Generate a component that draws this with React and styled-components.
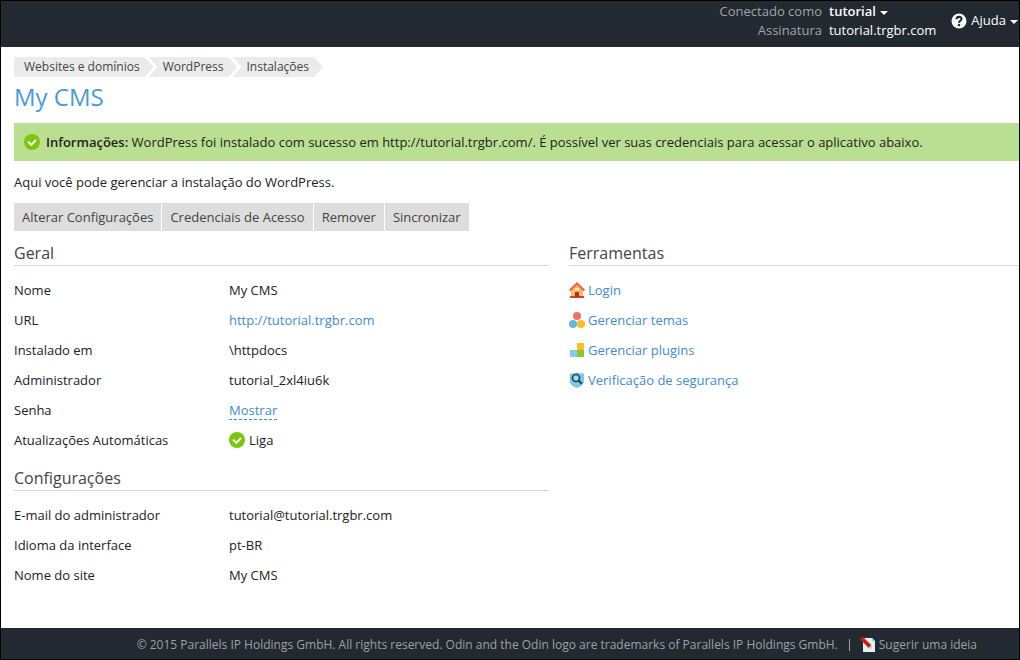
import React from "react";
import styled, { createGlobalStyle } from "styled-components";

const GlobalStyle = createGlobalStyle`
  *, *::before, *::after { box-sizing: border-box; }
  body {
    margin: 0;
    background: #fff;
    color: #222;
    font: 13px/20px "Open Sans", "Noto Sans", sans-serif;
  }
  button { font: inherit; cursor: pointer; }
`;

const Page = styled.div`
  display: flex;
  flex-direction: column;
  min-height: 100vh;
  border: 1px solid #000;
`;

const TopBar = styled.header`
  display: flex;
  justify-content: flex-end;
  align-items: flex-start;
  height: 46px;
  background: #222930;
  color: #fff;
`;

const Account = styled.dl`
  display: grid;
  grid-template-columns: auto auto;
  column-gap: 7px;
  margin: 1px 15px 0 0;
  line-height: 19px;
`;

const AccountLabel = styled.dt`
  color: #a0a5a8;
  text-align: right;
`;

const AccountValue = styled.dd`
  margin: 0;
`;

const MenuButton = styled.button`
  display: inline-flex;
  align-items: center;
  gap: 4px;
  padding: 0;
  border: 0;
  background: none;
  color: #fff;
  line-height: 19px;
  font-weight: ${(p) => (p.$strong ? 600 : 400)};
`;

const HelpArea = styled.div`
  padding: 10px 1px 0 0;
`;

const Caret = styled.span`
  margin-top: 3px;
  border: solid transparent;
  border-width: 4px 4px 0;
  border-top-color: #fff;
`;

const Content = styled.main`
  flex: 1;
  padding: 10px 0 24px 13px;
`;

const Crumbs = styled.ol`
  display: flex;
  margin: 0;
  padding: 0;
  list-style: none;
  font-size: 12px;
`;

const Crumb = styled.li`
  height: 20px;
  margin-right: -5px;
  padding: 0 14px;
  background: #ebebeb;
  clip-path: polygon(0 0, calc(100% - 9px) 0, 100% 50%, calc(100% - 9px) 100%, 0 100%, 9px 50%);

  &:first-child {
    padding-left: 10px;
    clip-path: polygon(0 0, calc(100% - 9px) 0, 100% 50%, calc(100% - 9px) 100%, 0 100%);
  }
`;

const CrumbLink = styled.a`
  color: #444;
  text-decoration: none;
`;

const Title = styled.h1`
  margin: 4px 0 11px;
  color: #4a9bdc;
  font-size: 24px;
  line-height: 31px;
  font-weight: 400;
`;

const Message = styled.div`
  display: flex;
  align-items: center;
  gap: 6px;
  min-height: 38px;
  padding: 0 10px;
  background: #bbdf91;
`;

const MessageLabel = styled.strong`
  font-weight: 600;
`;

const Intro = styled.p`
  margin: 11px 0;
`;

const Toolbar = styled.div`
  display: flex;
  gap: 1px;
`;

const ToolButton = styled.button`
  height: 28px;
  padding: 0 8px;
  border: 0;
  background: #ddd;
  color: #444;
`;

const Columns = styled.div`
  display: grid;
  grid-template-columns: 535fr 450fr;
  column-gap: 20px;
  margin-top: 10px;
`;

const Section = styled.section`
  margin-bottom: 11px;
`;

const SectionTitle = styled.h2`
  margin: 0 0 9px;
  border-bottom: 1px solid #d5d5d5;
  color: #444;
  font-size: 16px;
  line-height: 24px;
  font-weight: 400;
`;

const Details = styled.dl`
  display: grid;
  grid-template-columns: 215px 1fr;
  margin: 0;
  line-height: 30px;
`;

const Term = styled.dt``;

const Value = styled.dd`
  display: flex;
  align-items: center;
  gap: 4px;
  margin: 0;
`;

const Link = styled.a`
  color: #428bd0;
  text-decoration: none;
`;

const RevealButton = styled.button`
  padding: 0;
  border: 0;
  border-bottom: 1px dashed #428bd0;
  background: none;
  color: #428bd0;
  line-height: 18px;
`;

const ToolList = styled.ul`
  margin: 0;
  padding: 0;
  list-style: none;
`;

const ToolItem = styled.li`
  display: flex;
  align-items: center;
  gap: 3px;
  height: 30px;
`;

const Footer = styled.footer`
  display: flex;
  justify-content: flex-end;
  align-items: center;
  min-height: 31px;
  padding: 3px 42px 0 0;
  background: #222930;
  color: #9da2a5;
  font-size: 12px;
`;

const Divider = styled.span`
  width: 1px;
  height: 12px;
  margin: 0 10px 0 11px;
  background: #9da2a5;
`;

const FooterLink = styled.a`
  display: inline-flex;
  align-items: center;
  gap: 3px;
  color: inherit;
  text-decoration: none;
`;

const Icon = styled.svg.attrs({ width: 16, height: 16, viewBox: "0 0 16 16", "aria-hidden": true })`
  flex: none;
`;

const CheckIcon = () => (
  <Icon>
    <circle cx="8" cy="8" r="8" fill="#7ac70c" />
    <path d="M4 7.5l3.3 3.3L12 6" fill="none" stroke="#fff" strokeWidth="1.9" />
  </Icon>
);

const HelpIcon = () => (
  <Icon>
    <circle cx="8" cy="8" r="7.5" fill="#fff" />
    <path d="M5.6 6.2c.1-3.2 5-3 4.9-.2 0 1.8-2.500 1.800-2.500 3.800" fill="none" stroke="#222930" strokeWidth="2.100" />
    <circle cx="8" cy="12" r="1.3" fill="#222930" />
  </Icon>
);

const HomeIcon = () => (
  <Icon>
    <path d="M2 7.5L8 2l6 5.5V15H2z" fill="#ffb869" />
    <path d="M1 14h14v2H1z" fill="#c94d28" />
    <path d="M6 10h4v5H6z" fill="#b92f16" />
    <path d="M6 6h4v2H6z" fill="#fff0d6" />
    <path d="M.7 8.4L8 1.5l7.3 6.9" fill="none" stroke="#ef6336" strokeWidth="2" />
  </Icon>
);

const ThemesIcon = () => (
  <Icon>
    <circle cx="8" cy="4" r="4" fill="#f56d64" />
    <circle cx="4" cy="12" r="4" fill="#60b7e2" />
    <circle cx="12" cy="12" r="4" fill="#ffbe28" />
  </Icon>
);

const PluginsIcon = () => (
  <Icon>
    <path d="M1 8h7v7H1z" fill="#82cdee" />
    <path d="M8 1h7v7H8z" fill="#ffbe28" />
    <path d="M8 8h7v7H8z" fill="#8bc82d" />
  </Icon>
);

const SecurityIcon = () => (
  <Icon>
    <path d="M8 0l2 1.3 5 .3V9c0 3.7-3.3 5.6-7 7-3.7-1.4-7-3.3-7-7V1.6l5-.3z" fill="#79c8e8" />
    <circle cx="7" cy="6" r="3.5" fill="#a2def2" stroke="#24475c" strokeWidth="1.7" />
    <path d="M9.5 8.5l3.3 3.3" stroke="#24475c" strokeWidth="2.3" />
  </Icon>
);

const IdeaIcon = () => (
  <Icon>
    <path d="M3 1h9l3 3v11H3z" fill="#d9f3fc" />
    <path d="M12 1v3h3z" fill="#94cde2" />
    <path d="M0 2l3-2 8.3 8-2.8 3z" fill="#d82214" />
    <path d="M1.5 1l8.3 8.5" stroke="#a9120d" strokeWidth="1" />
    <path d="M11.3 8l.9 4-3.7-1z" fill="#f3c35b" />
  </Icon>
);

const crumbs = ["Websites e domínios", "WordPress", "Instalações"];
const actions = ["Alterar Configurações", "Credenciais de Acesso", "Remover", "Sincronizar"];

const general = [
  ["Nome", "My CMS"],
  ["URL", <Link href="#site">http://tutorial.trgbr.com</Link>],
  ["Instalado em", "\\httpdocs"],
  ["Administrador", "tutorial_2xl4iu6k"],
  ["Senha", <RevealButton type="button">Mostrar</RevealButton>],
  ["Atualizações Automáticas", <><CheckIcon />Liga</>],
];

const settings = [
  ["E-mail do administrador", "tutorial@tutorial.trgbr.com"],
  ["Idioma da interface", "pt-BR"],
  ["Nome do site", "My CMS"],
];

const tools = [
  ["Login", HomeIcon],
  ["Gerenciar temas", ThemesIcon],
  ["Gerenciar plugins", PluginsIcon],
  ["Verificação de segurança", SecurityIcon],
];

function DetailSection({ title, rows }) {
  return (
    <Section>
      <SectionTitle>{title}</SectionTitle>
      <Details>
        {rows.map(([term, value]) => (
          <React.Fragment key={term}>
            <Term>{term}</Term>
            <Value>{value}</Value>
          </React.Fragment>
        ))}
      </Details>
    </Section>
  );
}

export default function App() {
  return (
    <Page>
      <GlobalStyle />
      <TopBar>
        <Account>
          <AccountLabel>Conectado como</AccountLabel>
          <AccountValue>
            <MenuButton type="button" $strong>tutorial<Caret /></MenuButton>
          </AccountValue>
          <AccountLabel>Assinatura</AccountLabel>
          <AccountValue>tutorial.trgbr.com</AccountValue>
        </Account>
        <HelpArea>
          <MenuButton type="button"><HelpIcon />Ajuda<Caret /></MenuButton>
        </HelpArea>
      </TopBar>
      <Content>
        <nav>
          <Crumbs>
            {crumbs.map((name) => (
              <Crumb key={name}><CrumbLink href="#crumb">{name}</CrumbLink></Crumb>
            ))}
          </Crumbs>
        </nav>
        <Title>My CMS</Title>
        <Message role="status">
          <CheckIcon />
          <span>
            <MessageLabel>Informações:</MessageLabel> WordPress foi instalado com sucesso em http://tutorial.trgbr.com/. É possível ver suas credenciais para acessar o aplicativo abaixo.
          </span>
        </Message>
        <Intro>Aqui você pode gerenciar a instalação do WordPress.</Intro>
        <Toolbar>
          {actions.map((name) => <ToolButton type="button" key={name}>{name}</ToolButton>)}
        </Toolbar>
        <Columns>
          <div>
            <DetailSection title="Geral" rows={general} />
            <DetailSection title="Configurações" rows={settings} />
          </div>
          <Section>
            <SectionTitle>Ferramentas</SectionTitle>
            <ToolList>
              {tools.map(([name, ToolIcon]) => (
                <ToolItem key={name}><ToolIcon /><Link href="#tool">{name}</Link></ToolItem>
              ))}
            </ToolList>
          </Section>
        </Columns>
      </Content>
      <Footer>
        <span>© 2015 Parallels IP Holdings GmbH. All rights reserved. Odin and the Odin logo are trademarks of Parallels IP Holdings GmbH.</span>
        <Divider />
        <FooterLink href="#idea"><IdeaIcon />Sugerir uma ideia</FooterLink>
      </Footer>
    </Page>
  );
}
